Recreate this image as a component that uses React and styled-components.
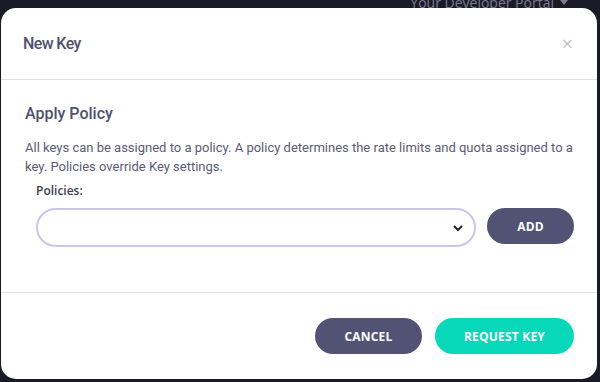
import React from "react";
import styled, { createGlobalStyle } from "styled-components";

const Global = createGlobalStyle`
  html, body { margin: 0; padding: 0; background: #1b1b27; }
  body { font-family: Roboto, "Open Sans", sans-serif; }
  * { box-sizing: border-box; }
`;

const Page = styled.div`
  position: relative;
  width: 600px;
  height: 382px;
  background: #1b1b27;
  overflow: hidden;
  padding: 8px 3px 0 1px;
`;

const TopNav = styled.div`
  position: absolute;
  top: -7px;
  right: 32px;
  font-family: "Open Sans", sans-serif;
  font-size: 14px;
  color: #7d7d92;
  display: flex;
  align-items: center;
  gap: 6px;
`;

const Caret = styled.span`
  width: 0;
  height: 0;
  border-left: 4px solid transparent;
  border-right: 4px solid transparent;
  border-top: 5px solid #7d7d92;
`;

const Modal = styled.div`
  position: relative;
  background: #fff;
  border-radius: 15px;
  height: 371px;
  display: flex;
  flex-direction: column;
`;

const Header = styled.div`
  height: 72px;
  flex: none;
  display: flex;
  align-items: center;
  justify-content: space-between;
  padding: 0 24px 0 22px;
  border-bottom: 1px solid #e3e3e3;
`;

const Title = styled.h2`
  margin: 0;
  font-family: Roboto, sans-serif;
  font-weight: 500;
  font-size: 16px;
  letter-spacing: -0.6px;
  color: #4f4f6f;
`;

const Close = styled.span`
  font-family: "Open Sans", sans-serif;
  font-size: 20px;
  color: #c4c4c4;
  line-height: 1;
`;

const Body = styled.div`
  flex: 1;
  padding: 24px 22px 0 24px;
  border-bottom: 1px solid #e3e3e3;
`;

const Section = styled.h3`
  margin: 0 0 15px;
  font-family: Roboto, sans-serif;
  font-weight: 500;
  font-size: 16px;
  color: #4f4f6f;
`;

const Text = styled.p`
  margin: 0 0 6px;
  font-family: Roboto, sans-serif;
  font-size: 13px;
  line-height: 19px;
  color: #5b5b78;
`;

const Field = styled.div`
  padding-left: 11px;
`;

const Label = styled.label`
  display: block;
  font-family: "Open Sans", sans-serif;
  font-weight: 600;
  font-size: 12px;
  color: #3c3c50;
  margin-bottom: 9px;
`;

const Row = styled.div`
  display: flex;
  align-items: flex-start;
  gap: 11px;
`;

const Select = styled.div`
  width: 440px;
  height: 39px;
  border: 2px solid #c9c7ea;
  border-radius: 20px;
  display: flex;
  align-items: center;
  justify-content: flex-end;
  padding-right: 10px;
`;

const Button = styled.button`
  border: none;
  height: 36px;
  width: ${(p) => p.$w}px;
  border-radius: 18px;
  background: ${(p) => (p.$primary ? "#07d8b9" : "#525274")};
  color: #fff;
  font-family: "Open Sans", sans-serif;
  font-weight: 700;
  font-size: 12px;
  letter-spacing: 0.2px;
  display: flex;
  align-items: center;
  justify-content: center;
  padding: 0;
`;

const Footer = styled.div`
  height: 86px;
  flex: none;
  display: flex;
  align-items: center;
  justify-content: flex-end;
  gap: 13px;
  padding-right: 23px;
  padding-bottom: 0;
`;

export default function App() {
  return (
    <>
      <Global />
      <Page>
        <TopNav>
          Your Developer Portal <Caret />
        </TopNav>
        <Modal>
          <Header>
            <Title>New Key</Title>
            <Close>×</Close>
          </Header>
          <Body>
            <Section>Apply Policy</Section>
            <Text>
              All keys can be assigned to a policy. A policy determines the rate limits and quota assigned to a
              key. Policies override Key settings.
            </Text>
            <Field>
              <Label>Policies:</Label>
              <Row>
                <Select>
                  <svg width="12" height="8" viewBox="0 0 12 8">
                    <path d="M2 2l4 4 4-4" fill="none" stroke="#222" strokeWidth="2" />
                  </svg>
                </Select>
                <Button $w={87}>ADD</Button>
              </Row>
            </Field>
          </Body>
          <Footer>
            <Button $w={107}>CANCEL</Button>
            <Button $w={139} $primary>REQUEST KEY</Button>
          </Footer>
        </Modal>
      </Page>
    </>
  );
}
